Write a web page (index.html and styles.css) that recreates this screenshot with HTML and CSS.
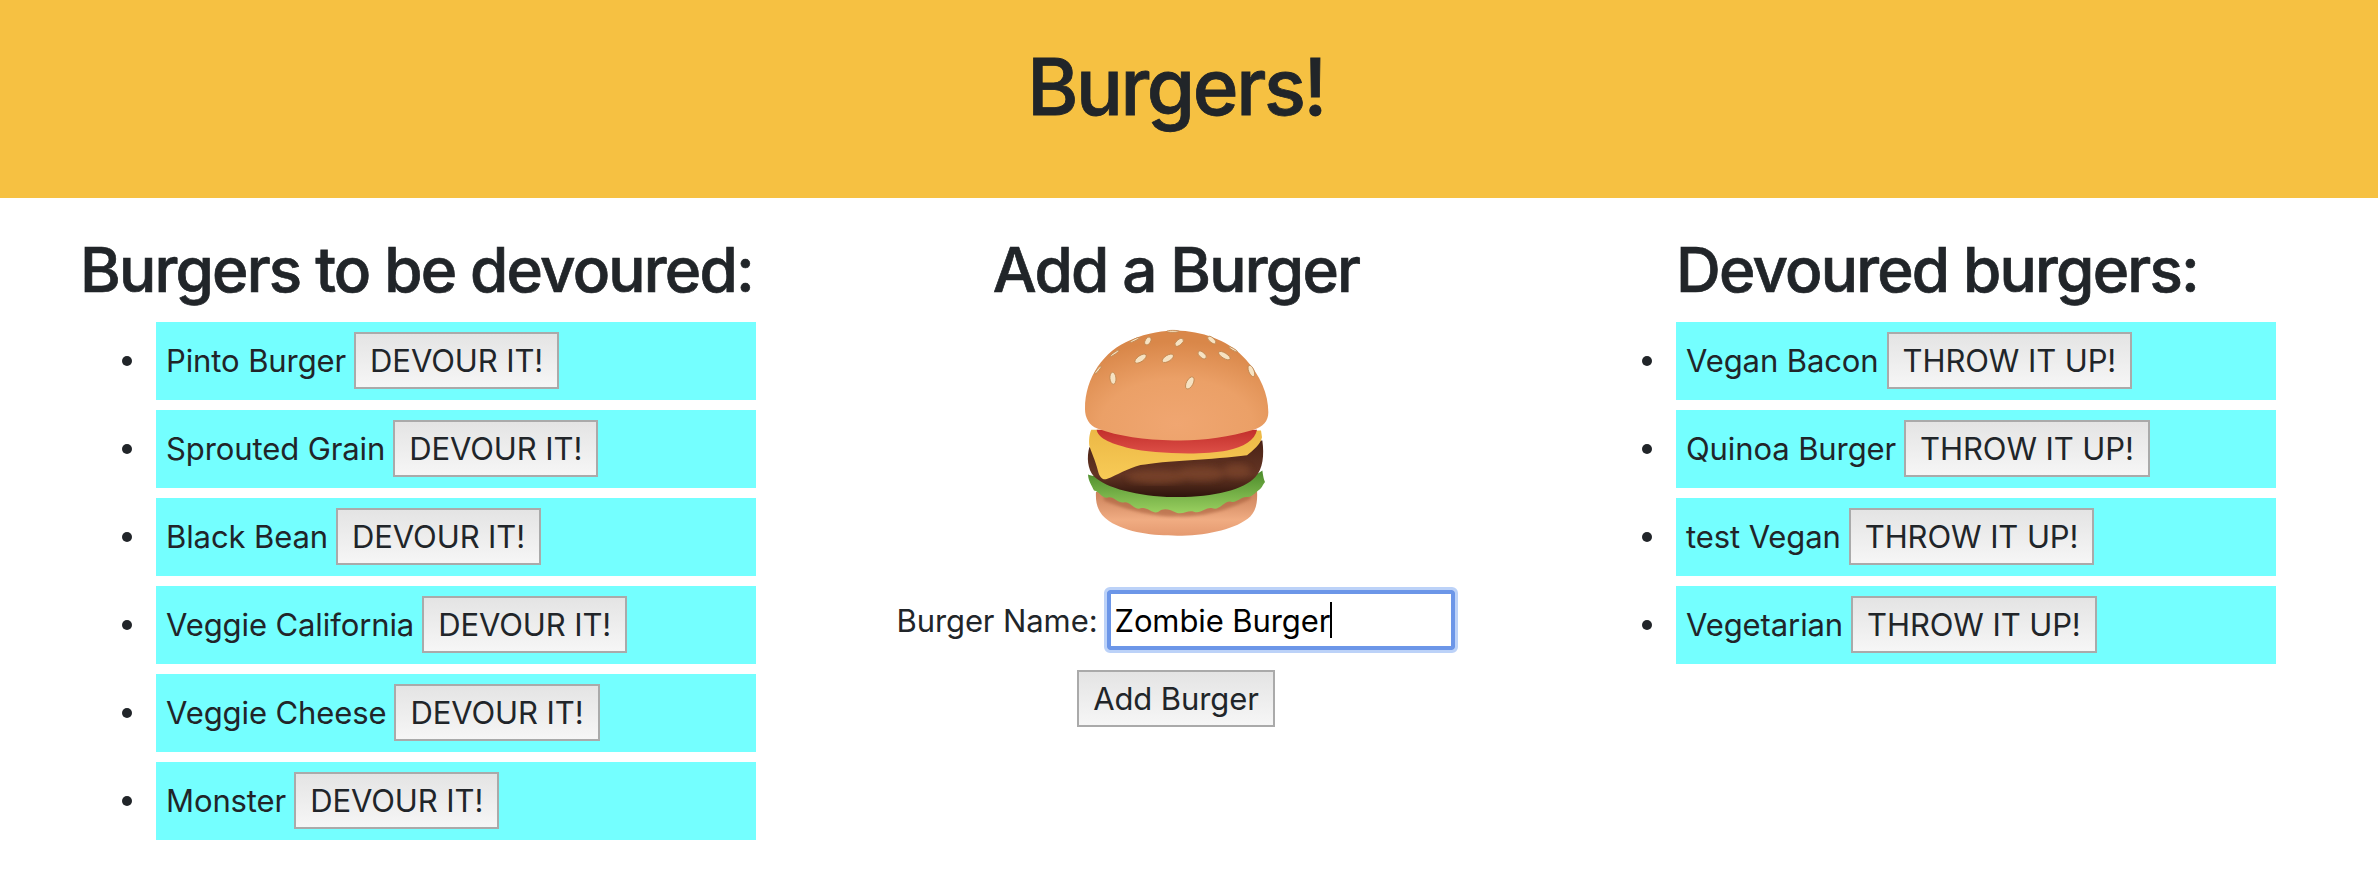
FILE: index.html
```html
<!DOCTYPE html>
<html lang="en">
<head>
  <meta charset="UTF-8" />
  <meta name="viewport" content="width=device-width, initial-scale=1.0"/>
  <title>Burgers!</title>
  <link rel="stylesheet" href="styles.css">
</head>
<body>

  <!-- Header -->
  <header class="banner">
    <h1>Burgers!</h1>
  </header>

  <main class="columns">

    <!-- To be devoured -->
    <section class="col col-left">
      <h2>Burgers to be devoured:</h2>
      <ul class="burger-list">
        <li><div class="burger-item">Pinto Burger <button>DEVOUR IT!</button></div></li>
        <li><div class="burger-item">Sprouted Grain <button>DEVOUR IT!</button></div></li>
        <li><div class="burger-item">Black Bean <button>DEVOUR IT!</button></div></li>
        <li><div class="burger-item">Veggie California <button>DEVOUR IT!</button></div></li>
        <li><div class="burger-item">Veggie Cheese <button>DEVOUR IT!</button></div></li>
        <li><div class="burger-item">Monster <button>DEVOUR IT!</button></div></li>
      </ul>
    </section>

    <!-- Add form -->
    <section class="col col-center">
      <h2>Add a Burger</h2>
      <svg class="burger-pic" viewBox="130 85 556 625" aria-hidden="true">
        <defs>
          <radialGradient id="bunTop" cx="50%" cy="85%" r="75%">
            <stop offset="0" stop-color="#f0a671"/>
            <stop offset="0.55" stop-color="#eba067"/>
            <stop offset="1" stop-color="#d98749"/>
          </radialGradient>
          <linearGradient id="bunBottom" x1="0" y1="0" x2="0" y2="1">
            <stop offset="0" stop-color="#c97f58"/>
            <stop offset="0.65" stop-color="#f0ac82"/>
            <stop offset="1" stop-color="#e59a70"/>
          </linearGradient>
          <linearGradient id="patty" x1="0" y1="0" x2="0" y2="1">
            <stop offset="0" stop-color="#4a2216"/>
            <stop offset="0.6" stop-color="#643524"/>
            <stop offset="1" stop-color="#2e140c"/>
          </linearGradient>
          <linearGradient id="lettuce" x1="0" y1="0" x2="0" y2="1">
            <stop offset="0" stop-color="#4a8a2a"/>
            <stop offset="1" stop-color="#9ad060"/>
          </linearGradient>
          <linearGradient id="tomato" x1="0" y1="0" x2="0" y2="1">
            <stop offset="0" stop-color="#c22f2b"/>
            <stop offset="1" stop-color="#dd4f47"/>
          </linearGradient>
          <linearGradient id="cheese" x1="0" y1="0" x2="0" y2="1">
            <stop offset="0" stop-color="#ecb846"/>
            <stop offset="1" stop-color="#f8cb56"/>
          </linearGradient>
          <filter id="soft"><feGaussianBlur stdDeviation="9"/></filter>
          <filter id="softer"><feGaussianBlur stdDeviation="5"/></filter>
        </defs>
        <path fill="url(#bunBottom)" d="M166 575 C164 610 172 640 205 662 C260 698 340 706 410 706 C490 706 575 690 622 655 C648 636 652 605 650 570 Z"/>
        <path fill="#a8603c" opacity="0.6" filter="url(#softer)" d="M190 600 C260 630 340 650 410 648 C490 650 560 630 630 596 L630 570 L190 570 Z"/>
        <path fill="url(#lettuce)" d="M142 522 C160 530 240 540 400 545 C520 548 640 535 666 510 C668 525 670 535 674 545 C668 552 664 566 650 573 C640 582 632 590 618 590 C600 590 590 608 572 604 C552 600 538 632 516 624 C498 618 482 642 460 634 C442 628 428 644 408 637 C390 630 372 620 354 634 C336 644 320 616 300 624 C282 630 268 602 250 606 C232 610 218 584 200 592 C184 594 176 572 160 570 C152 552 144 545 142 522 Z"/>
        <path fill="url(#patty)" d="M146 440 C138 470 140 505 160 528 C196 562 290 588 400 590 C510 592 610 570 645 530 C668 505 672 465 666 420 Z"/>
        <g fill="#7c452c" filter="url(#soft)" opacity="0.75">
          <ellipse cx="350" cy="530" rx="90" ry="20"/>
          <ellipse cx="480" cy="520" rx="70" ry="22"/>
          <ellipse cx="590" cy="510" rx="40" ry="20"/>
        </g>
        <path fill="url(#cheese)" d="M152 388 C146 400 144 420 146 436 C150 450 164 480 172 512 C176 530 186 540 198 536 C232 524 258 505 300 494 C370 480 520 478 620 464 C640 448 660 432 665 410 L662 390 Z"/>
        <path fill="url(#tomato)" d="M168 388 C172 410 200 428 270 444 C330 458 480 466 560 450 C610 440 644 420 650 388 Z"/>
        <path fill="url(#bunTop)" d="M133 325 C133 230 190 150 270 118 C330 92 390 88 420 90 C500 94 570 125 615 175 C660 225 684 280 684 335 C684 362 668 378 640 388 C560 412 480 422 400 420 C310 418 235 408 170 384 C146 375 133 352 133 325 Z"/>
        <g fill="#f6e2c2" stroke="#bf8650" stroke-width="2.5">
          <ellipse cx="217" cy="233" rx="9" ry="18" transform="rotate(-5 217 233)"/>
          <ellipse cx="448" cy="247" rx="10" ry="20" transform="rotate(28 448 247)"/>
          <ellipse cx="300" cy="174" rx="9" ry="20" transform="rotate(55 300 174)"/>
          <ellipse cx="382" cy="173" rx="9" ry="19" transform="rotate(58 382 173)"/>
          <ellipse cx="322" cy="121" rx="8" ry="13" transform="rotate(28 322 121)"/>
          <ellipse cx="416" cy="125" rx="8" ry="15" transform="rotate(50 416 125)"/>
          <ellipse cx="485" cy="163" rx="8" ry="15" transform="rotate(-50 485 163)"/>
          <ellipse cx="552" cy="165" rx="8" ry="20" transform="rotate(-58 552 165)"/>
          <ellipse cx="514" cy="118" rx="7" ry="15" transform="rotate(-50 514 118)"/>
          <ellipse cx="633" cy="211" rx="8" ry="18" transform="rotate(-22 633 211)"/>
          <ellipse cx="397" cy="92" rx="18" ry="3"/>
          <ellipse cx="282" cy="118" rx="16" ry="3" transform="rotate(-25 282 118)"/>
          <ellipse cx="222" cy="158" rx="16" ry="3" transform="rotate(-35 222 158)"/>
          <ellipse cx="172" cy="208" rx="15" ry="3" transform="rotate(-50 172 208)"/>
          <ellipse cx="578" cy="146" rx="15" ry="3" transform="rotate(30 578 146)"/>
        </g>
      </svg>
      <form class="add-form">
        <div class="name-row">
          <label>Burger Name:</label>
          <div class="name-input">Zombie Burger<span class="caret"></span></div>
        </div>
        <button type="button">Add Burger</button>
      </form>
    </section>

    <!-- Devoured -->
    <section class="col col-right">
      <h2>Devoured burgers:</h2>
      <ul class="burger-list">
        <li><div class="burger-item">Vegan Bacon <button>THROW IT UP!</button></div></li>
        <li><div class="burger-item">Quinoa Burger <button>THROW IT UP!</button></div></li>
        <li><div class="burger-item">test Vegan <button>THROW IT UP!</button></div></li>
        <li><div class="burger-item">Vegetarian <button>THROW IT UP!</button></div></li>
      </ul>
    </section>

  </main>

</body>
</html>
```

FILE: styles.css
```css
* { box-sizing: border-box; margin: 0; padding: 0; }
body {
  font-family: Inter, 'Liberation Sans', sans-serif;
  font-size: 31px;
  letter-spacing: -0.1px;
  color: #212529;
  background: #fff;
}

.banner {
  background-color: #f6c142;
  height: 198px;
  padding: 0 26px 24px 0;
  display: flex;
  align-items: center;
  justify-content: center;
}

.banner h1 {
  font-size: 78px;
  font-weight: 500;
  letter-spacing: -2.4px;
  line-height: 1.2;
  -webkit-text-stroke: 0.8px #212529;
}

.columns {
  display: grid;
  grid-template-columns: 776px 800px 1fr;
  padding-top: 36px;
}

h2 {
  font-size: 62px;
  font-weight: 500;
  letter-spacing: -1.8px;
  line-height: 72px;
  margin-bottom: 16px;
  -webkit-text-stroke: 0.7px #212529;
}

.col-left { padding-left: 80px; }
.col-center { text-align: center; }
.col-right { padding-left: 100px; }

.burger-list {
  list-style: none;
  width: 600px;
}

.col-left .burger-list { margin-left: 76px; }

.burger-list li {
  position: relative;
  margin-bottom: 10px;
}

/* bullet sits further out than the default marker */
.burger-list li::before {
  content: "";
  position: absolute;
  left: -34px;
  top: 34px;
  width: 10px;
  height: 10px;
  border-radius: 50%;
  background: #212529;
}

.burger-item {
  background: #74ffff;
  height: 78px;
  padding: 0 0 2px 10px;
  display: flex;
  align-items: center;
  gap: 8px;
}

button {
  font-family: inherit;
  font-size: 31px;
  letter-spacing: -0.1px;
  color: #212529;
  height: 57px;
  padding: 0 14px;
  border: 2px solid #aaa;
  background: linear-gradient(#e4e4e4, #f6f6f6);
}

.burger-pic {
  display: block;
  width: 185px;
  height: 208px;
  margin: 23px auto 53px;
}

.add-form {
  display: flex;
  flex-direction: column;
  align-items: center;
  gap: 20px;
}

.name-row {
  display: flex;
  align-items: center;
  gap: 10px;
}

.name-input {
  width: 348px;
  height: 60px;
  padding-left: 3px;
  display: flex;
  align-items: center;
  text-align: left;
  color: #000;
  border: 4px solid #6c96e8;
  border-radius: 3px;
  outline: 3px solid #bcd2f8;
}

.caret {
  width: 2px;
  height: 36px;
  background: #000;
}
```
